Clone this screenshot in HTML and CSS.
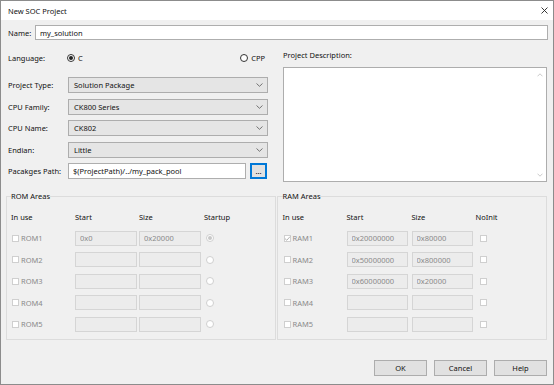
FILE: index.html
```html
<!DOCTYPE html>
<html lang="en">
<head>
    <meta charset="UTF-8">
    <title>New SOC Project</title>
    <link rel="stylesheet" href="styles.css">
</head>
<body>
    <div class="window">
        <div class="titlebar">
            <span>New SOC Project</span>
            <svg class="close" width="7" height="7" viewBox="0 0 7 7"><path d="M0.5 0.5L6.5 6.5M6.5 0.5L0.5 6.5" stroke="#222" stroke-width="0.9"/></svg>
        </div>
        <div class="content">
            <div class="name-row">
                <label for="name">Name:</label>
                <input type="text" id="name" class="text name" value="my_solution">
            </div>

            <div class="top">
                <div class="left">
                    <div class="lang-row">
                        <span class="lbl">Language:</span>
                        <span class="radio-item"><span class="radio on"></span>C</span>
                        <span class="radio-item cpp"><span class="radio"></span>CPP</span>
                    </div>
                    <div class="row first">
                        <span class="lbl">Project Type:</span>
                        <div class="combo"><span>Solution Package</span><svg width="7" height="4" viewBox="0 0 7 4"><path d="M0.5 0.5L3.5 3.3L6.5 0.5" fill="none" stroke="#666" stroke-width="0.9"/></svg></div>
                    </div>
                    <div class="row">
                        <span class="lbl">CPU Family:</span>
                        <div class="combo"><span>CK800 Series</span><svg width="7" height="4" viewBox="0 0 7 4"><path d="M0.5 0.5L3.5 3.3L6.5 0.5" fill="none" stroke="#666" stroke-width="0.9"/></svg></div>
                    </div>
                    <div class="row">
                        <span class="lbl">CPU Name:</span>
                        <div class="combo"><span>CK802</span><svg width="7" height="4" viewBox="0 0 7 4"><path d="M0.5 0.5L3.5 3.3L6.5 0.5" fill="none" stroke="#666" stroke-width="0.9"/></svg></div>
                    </div>
                    <div class="row">
                        <span class="lbl">Endian:</span>
                        <div class="combo"><span>Little</span><svg width="7" height="4" viewBox="0 0 7 4"><path d="M0.5 0.5L3.5 3.3L6.5 0.5" fill="none" stroke="#666" stroke-width="0.9"/></svg></div>
                    </div>
                    <div class="row">
                        <span class="lbl">Pacakges Path:</span>
                        <input type="text" class="text path" value="$(ProjectPath)/../my_pack_pool">
                        <button class="browse">...</button>
                    </div>
                </div>

                <div class="right">
                    <div class="desc-label">Project Description:</div>
                    <div class="desc">
                        <svg width="6" height="4" viewBox="0 0 6 4"><path d="M0.5 3.3L3 0.8L5.5 3.3" fill="none" stroke="#c4c4c4" stroke-width="0.9"/></svg>
                        <svg width="6" height="4" viewBox="0 0 6 4"><path d="M0.5 0.7L3 3.2L5.5 0.7" fill="none" stroke="#c4c4c4" stroke-width="0.9"/></svg>
                    </div>
                </div>
            </div>

            <div class="groups">
                <fieldset class="group rom">
                    <legend>ROM Areas</legend>
                    <div class="grid">
                        <span>In use</span><span>Start</span><span>Size</span><span>Startup</span>

                        <span class="check-item"><span class="check"></span>ROM1</span>
                        <input class="text off" value="0x0" disabled>
                        <input class="text off" value="0x20000" disabled>
                        <span class="radio small on dim"></span>

                        <span class="check-item"><span class="check"></span>ROM2</span>
                        <input class="text off" disabled>
                        <input class="text off" disabled>
                        <span class="radio small"></span>

                        <span class="check-item"><span class="check"></span>ROM3</span>
                        <input class="text off" disabled>
                        <input class="text off" disabled>
                        <span class="radio small"></span>

                        <span class="check-item"><span class="check"></span>ROM4</span>
                        <input class="text off" disabled>
                        <input class="text off" disabled>
                        <span class="radio small"></span>

                        <span class="check-item"><span class="check"></span>ROM5</span>
                        <input class="text off" disabled>
                        <input class="text off" disabled>
                        <span class="radio small"></span>
                    </div>
                </fieldset>

                <fieldset class="group ram">
                    <legend>RAM Areas</legend>
                    <div class="grid">
                        <span>In use</span><span>Start</span><span>Size</span><span>NoInit</span>

                        <span class="check-item"><span class="check"><svg width="7" height="7" viewBox="0 0 7 7"><path d="M1 3.6L2.8 5.3L6 1.6" fill="none" stroke="#a8a8a8" stroke-width="0.9"/></svg></span>RAM1</span>
                        <input class="text off" value="0x20000000" disabled>
                        <input class="text off" value="0x80000" disabled>
                        <span class="check noinit"></span>

                        <span class="check-item"><span class="check"></span>RAM2</span>
                        <input class="text off" value="0x50000000" disabled>
                        <input class="text off" value="0x800000" disabled>
                        <span class="check noinit"></span>

                        <span class="check-item"><span class="check"></span>RAM3</span>
                        <input class="text off" value="0x60000000" disabled>
                        <input class="text off" value="0x20000" disabled>
                        <span class="check noinit"></span>

                        <span class="check-item"><span class="check"></span>RAM4</span>
                        <input class="text off" disabled>
                        <input class="text off" disabled>
                        <span class="check noinit"></span>

                        <span class="check-item"><span class="check"></span>RAM5</span>
                        <input class="text off" disabled>
                        <input class="text off" disabled>
                        <span class="check noinit"></span>
                    </div>
                </fieldset>
            </div>

            <div class="buttons">
                <button class="btn">OK</button>
                <button class="btn">Cancel</button>
                <button class="btn">Help</button>
            </div>
        </div>
    </div>
</body>
</html>
```

FILE: styles.css
```css
* {
    box-sizing: border-box;
}

body {
    margin: 0;
    font-family: "Noto Sans", Arial, sans-serif;
    font-size: 7.5px;
    color: #111;
}

.window {
    width: 554px;
    height: 385px;
    border: 1px solid #8c8c8c;
    background-color: #f0f0f0;
    display: flex;
    flex-direction: column;
}

.titlebar {
    height: 19px;
    background-color: white;
    display: flex;
    align-items: center;
    justify-content: space-between;
    padding: 0 5px 0 7px;
}

.content {
    padding: 5px 5px 0 7px;
}

input, button {
    font-family: inherit;
    font-size: inherit;
    margin: 0;
}

.text {
    height: 15px;
    border: 1px solid #aeaeae;
    background-color: white;
    padding: 0 4px;
    color: #111;
}

.text.off {
    width: 62px;
    background-color: #ececec;
    border-color: #d5d5d5;
    color: #8a8a8a;
}

.name-row {
    display: flex;
    align-items: center;
}

.name-row label {
    width: 27px;
}

.name {
    flex: 1;
}

.top {
    display: flex;
    gap: 15px;
    margin-top: 5px;
}

.left {
    width: 260px;
}

.lbl {
    width: 59px;
    flex-shrink: 0;
}

.lang-row {
    display: flex;
    align-items: center;
    height: 16px;
    margin-top: 5px;
}

.radio-item {
    display: flex;
    align-items: center;
    gap: 3px;
}

.radio-item.cpp {
    margin-left: auto;
    margin-right: 3px;
}

.radio {
    width: 8px;
    height: 8px;
    border: 1px solid #333;
    border-radius: 50%;
    background-color: white;
    display: flex;
    align-items: center;
    justify-content: center;
}

.radio.on::after {
    content: "";
    width: 4px;
    height: 4px;
    border-radius: 50%;
    background-color: #222;
}

.radio.small {
    border-color: #cfcfcf;
    margin-left: 2px;
}

.radio.dim.on::after {
    background-color: #c8c8c8;
}

.row {
    display: flex;
    align-items: center;
    height: 16px;
    margin-top: 5.5px;
}

.row.first {
    margin-top: 11px;
}

.combo {
    width: 200px;
    height: 16px;
    margin-left: 1px;
    background-color: #e5e5e5;
    border: 1px solid #adadad;
    display: flex;
    align-items: center;
    justify-content: space-between;
    padding: 0 4px 0 5px;
}

.path {
    width: 178px;
    height: 16px;
    margin-left: 1px;
}

.browse {
    width: 17px;
    height: 16px;
    margin-left: 4px;
    padding: 0;
    border: 1px solid #0078d7;
    box-shadow: inset 0 0 0 1px #0078d7;
    background-color: #e1e1e1;
    line-height: 10px;
}

.right {
    flex: 1;
    margin-right: 1px;
}

.desc-label {
    height: 16px;
    line-height: 16px;
    margin-top: 2px;
}

.desc {
    height: 115px;
    margin-top: 4px;
    background-color: white;
    border: 1px solid #adadad;
    display: flex;
    flex-direction: column;
    align-items: flex-end;
    justify-content: space-between;
    padding: 5px 3px 4px 0;
}

.groups {
    display: flex;
    gap: 1px;
    margin: 8px 1px 0 -2px;
}

.group {
    flex: 1;
    margin: 0;
    border: 1px solid #dcdcdc;
    padding: 7px 0 7px 4px;
    min-width: 0;
}

.group.ram {
    padding-left: 5px;
}

.group legend {
    padding: 0;
    line-height: 12px;
}

.grid {
    display: grid;
    grid-template-columns: 64px 64px 65px auto;
    grid-template-rows: repeat(6, 15px);
    row-gap: 6.5px;
    align-items: center;
}

.ram .grid {
    grid-template-columns: 64px 65px 64px auto;
}

.ram .text.off {
    width: 61px;
}

.check-item {
    display: flex;
    align-items: center;
    gap: 2px;
    color: #8a8a8a;
}

.check {
    width: 7px;
    height: 7px;
    margin-left: 1px;
    border: 1px solid #cfcfcf;
    background-color: white;
    display: flex;
}

.check svg {
    margin: -1px;
}

.check.noinit {
    margin-left: 4px;
}

.buttons {
    display: flex;
    justify-content: flex-end;
    gap: 7px;
    margin: 20px 1px 0 0;
}

.btn {
    width: 53px;
    height: 16px;
    padding: 0;
    border: 1px solid #adadad;
    background-color: #e1e1e1;
    color: #111;
}
```
